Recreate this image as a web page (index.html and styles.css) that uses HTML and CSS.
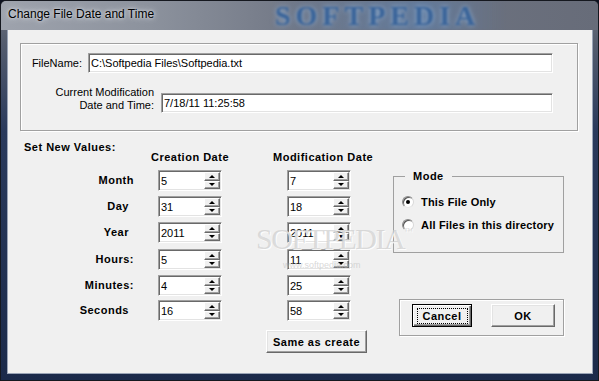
FILE: index.html
```html
<!DOCTYPE html>
<html lang="en">
  <head>
    <meta charset="UTF-8" />
    <meta name="viewport" content="width=device-width, initial-scale=1.0" />
    <title>Change File Date and Time</title>
    <link rel="stylesheet" href="styles.css">
  </head>
  <body>
    <div class="window">
      <div class="titlebar">
        <span class="title">Change File Date and Time</span>
        <span class="title-mark">SOFTPEDIA</span>
      </div>

      <div class="client">
        <div class="file-group etched">
          <div class="file-row">
            <label for="filename">FileName:</label>
            <input type="text" id="filename" class="field name-field" value="C:\Softpedia Files\Softpedia.txt" />
          </div>
          <div class="file-row two-line">
            <label for="curtime">Current Modification<br />Date and Time:</label>
            <input type="text" id="curtime" class="field time-field" value="7/18/11 11:25:58" />
          </div>
        </div>

        <div class="set-title">Set New Values:</div>
        <div class="cols heads">
          <div class="col-head create-head">Creation Date</div>
          <div class="col-head mod-head">Modification Date</div>
        </div>

        <div class="cols values">
          <fieldset class="mode">
            <legend>Mode</legend>
            <label class="radio"><input type="radio" name="mode" checked /> This File Only</label>
            <label class="radio"><input type="radio" name="mode" /> All Files in this directory</label>
          </fieldset>

          <div class="actions etched">
            <button class="btn focus cancel">Cancel</button>
            <button class="btn ok">OK</button>
          </div>

          <button class="btn same">Same as create</button>

          <div class="row-label">Month</div>
          <div class="spin create"><input type="text" value="5" /><span class="spin-btns"><span class="up"></span><span class="down"></span></span></div>
          <div class="spin mod"><input type="text" value="7" /><span class="spin-btns"><span class="up"></span><span class="down"></span></span></div>

          <div class="row-label short">Day</div>
          <div class="spin create"><input type="text" value="31" /><span class="spin-btns"><span class="up"></span><span class="down"></span></span></div>
          <div class="spin mod"><input type="text" value="18" /><span class="spin-btns"><span class="up"></span><span class="down"></span></span></div>

          <div class="row-label short">Year</div>
          <div class="spin create"><input type="text" value="2011" /><span class="spin-btns"><span class="up"></span><span class="down"></span></span></div>
          <div class="spin mod"><input type="text" value="2011" /><span class="spin-btns"><span class="up"></span><span class="down"></span></span></div>

          <div class="row-label">Hours:</div>
          <div class="spin create"><input type="text" value="5" /><span class="spin-btns"><span class="up"></span><span class="down"></span></span></div>
          <div class="spin mod"><input type="text" value="11" /><span class="spin-btns"><span class="up"></span><span class="down"></span></span></div>

          <div class="row-label">Minutes:</div>
          <div class="spin create"><input type="text" value="4" /><span class="spin-btns"><span class="up"></span><span class="down"></span></span></div>
          <div class="spin mod"><input type="text" value="25" /><span class="spin-btns"><span class="up"></span><span class="down"></span></span></div>

          <div class="row-label short">Seconds</div>
          <div class="spin create"><input type="text" value="16" /><span class="spin-btns"><span class="up"></span><span class="down"></span></span></div>
          <div class="spin mod"><input type="text" value="58" /><span class="spin-btns"><span class="up"></span><span class="down"></span></span></div>
        </div>
      </div>

      <div class="watermark">SOFTPEDIA<sup>™</sup></div>
      <div class="watermark-url">www.softpedia.com</div>
    </div>
  </body>
</html>
```

FILE: styles.css
```css
body {
  margin: 0;
  background-color: #0d1220;
  font-family: "Liberation Sans", Arial, sans-serif;
}
.window {
  position: relative;
  width: 599px;
  height: 381px;
  box-sizing: border-box;
  border: 1px solid #15181f;
  border-radius: 6px 6px 0 0;
  background: linear-gradient(to bottom, #6d7380 0, #555d6e 40px, #2a3a5c 130px, #1b2a4a 100%);
  display: flex;
  flex-direction: column;
  overflow: hidden;
}
.titlebar {
  position: relative;
  height: 29px;
  flex: none;
  background: linear-gradient(to right, #9ea3ad 0, #8c929d 25%, #717785 50%, #676c79 100%);
  overflow: hidden;
}
.title {
  position: relative;
  z-index: 1;
  display: block;
  padding-left: 7px;
  font-size: 12px;
  line-height: 26px;
  color: #000;
  text-shadow: 0 0 6px #e4e7ec, 0 0 3px #d8dce3;
}
.title-mark {
  position: absolute;
  left: 268px;
  top: 0;
  padding: 0 26px 0 6px;
  font-family: "Liberation Serif", serif;
  font-weight: bold;
  font-size: 28px;
  line-height: 29px;
  letter-spacing: 5px;
  color: #3b659a;
  text-shadow: 0 0 5px #8fb1d8;
  background: linear-gradient(to right, rgba(90, 130, 180, 0) 0, rgba(90, 130, 180, 0.5) 65%, rgba(90, 130, 180, 0) 100%);
  filter: blur(1.3px);
}
.client {
  flex: 1;
  margin: 0 6px 7px 7px;
  padding: 13px 13px 0 12px;
  background-color: #f0f0f0;
  box-shadow: 0 0 0 1px #9aa4b6;
  font-size: 11px;
  color: #000;
}

/* etched frames */
.etched {
  border: 1px solid #a0a0a0;
  box-shadow: inset 1px 1px #fff, 1px 1px #fff;
}
.file-group {
  width: 558px;
  box-sizing: border-box;
  padding: 9px 24px 17px 0;
}
.file-row {
  display: flex;
  justify-content: flex-end;
  align-items: center;
  gap: 6px;
}
.file-row label {
  line-height: 13px;
  text-align: right;
}
.file-row.two-line {
  margin-top: 13px;
  align-items: flex-end;
  gap: 7px;
}
.file-row.two-line label {
  padding-bottom: 1px;
}
.field {
  height: 20px;
  box-sizing: border-box;
  border: 1px solid;
  border-color: #a0a0a0 #fff #fff #a0a0a0;
  box-shadow: inset 1px 1px #696969, inset -1px -1px #e3e3e3;
  padding: 0 0 0 2px;
  font-family: "Liberation Sans", Arial, sans-serif;
  font-size: 11px;
  background-color: #fff;
  outline: none;
}
.name-field {
  width: 465px;
}
.time-field {
  width: 392px;
}

/* bold labels */
.set-title,
.col-head,
.row-label,
legend,
.radio,
.btn {
  font-weight: bold;
  font-size: 11px;
  letter-spacing: 0.5px;
}
.set-title {
  margin-top: 10px;
  padding-left: 4px;
  line-height: 13px;
}
.cols {
  display: grid;
  grid-template-columns: 122px 96px 155px 171px;
}
.heads {
  margin-top: -3px;
  height: 19px;
  line-height: 13px;
}
.create-head {
  grid-column: 2;
  justify-self: center;
}
.mod-head {
  grid-column: 3;
  margin-left: 35px;
}
.values {
  grid-template-rows: 26px 26px 27px 26px 25px 30px 23px;
}
.row-label {
  grid-column: 1;
  line-height: 21px;
  text-align: right;
  padding-right: 8px;
}
.row-label.short {
  padding-right: 13px;
}

/* spin boxes */
.spin {
  display: flex;
  align-self: start;
  width: 64px;
  height: 21px;
  box-sizing: border-box;
  border: 1px solid;
  border-color: #a0a0a0 #fff #fff #a0a0a0;
  padding: 1px;
  background-color: #fff;
  box-shadow: inset 1px 1px #696969, inset -1px -1px #e3e3e3;
}
.spin.create {
  grid-column: 2;
  margin-left: 16px;
}
.spin.mod {
  grid-column: 3;
  margin-left: 49px;
}
.spin input {
  flex: 1;
  min-width: 0;
  border: none;
  padding: 0 0 0 1px;
  font-family: "Liberation Sans", Arial, sans-serif;
  font-size: 11px;
  background: transparent;
  outline: none;
}
.spin-btns {
  display: flex;
  flex-direction: column;
  width: 16px;
}
.spin-btns span {
  flex: 1;
  display: flex;
  align-items: center;
  justify-content: center;
  background-color: #f0f0f0;
  border: 1px solid;
  border-color: #fff #696969 #696969 #fff;
  box-shadow: inset -1px -1px #a0a0a0;
}
.spin-btns span::before {
  content: "";
  width: 0;
  height: 0;
  border-left: 3px solid transparent;
  border-right: 3px solid transparent;
}
.spin-btns .up::before {
  border-bottom: 3px solid #000;
}
.spin-btns .down::before {
  border-top: 3px solid #000;
}

/* mode group */
.mode {
  grid-column: 4;
  grid-row: 1 / span 4;
  align-self: start;
  margin: 0;
  padding: 7px 0 16px 8px;
  min-width: 0;
  border: 1px solid #a0a0a0;
}
.mode legend {
  margin-left: 3px;
  padding: 0 8px;
  line-height: 13px;
}
.radio {
  display: flex;
  align-items: center;
  gap: 7px;
  height: 23px;
  letter-spacing: 0.2px;
}
.radio input {
  appearance: none;
  margin: 0;
  width: 12px;
  height: 12px;
  box-sizing: border-box;
  border-radius: 50%;
  border: 1px solid;
  border-color: #8a8a8a #d8d8d8 #e8e8e8 #8a8a8a;
  background-color: #fff;
  box-shadow: inset 1px 1px #555;
  display: flex;
  align-items: center;
  justify-content: center;
}
.radio input:checked::before {
  content: "";
  width: 4px;
  height: 4px;
  border-radius: 50%;
  background-color: #000;
}

/* buttons */
.btn {
  position: relative;
  height: 23px;
  padding: 0;
  font-family: "Liberation Sans", Arial, sans-serif;
  color: #000;
  background-color: #f0f0f0;
  border: 1px solid;
  border-color: #fff #696969 #696969 #fff;
  box-shadow: inset -1px -1px #a0a0a0, inset 1px 1px #e3e3e3;
}
.actions {
  grid-column: 4;
  grid-row: 6 / span 2;
  align-self: start;
  margin: -1px 0 0 6px;
  height: 37px;
  box-sizing: border-box;
  display: flex;
  align-items: flex-start;
  gap: 19px;
  padding: 4px 0 0 12px;
}
.cancel {
  width: 60px;
}
.ok {
  width: 64px;
}
.btn.focus {
  border-color: #000;
  box-shadow: inset 1px 1px #fff, inset -1px -1px #696969, inset -2px -2px #a0a0a0;
}
.btn.focus::after {
  content: "";
  position: absolute;
  inset: 3px 3px 2px 4px;
  border: 1px dotted #000;
}
.same {
  grid-column: 3;
  grid-row: 7;
  align-self: start;
  margin-left: 28px;
  width: 101px;
}

/* softpedia marks */
.watermark {
  position: absolute;
  left: 255px;
  top: 221px;
  font-family: "Liberation Serif", serif;
  font-size: 30px;
  letter-spacing: -1.5px;
  color: rgba(205, 205, 205, 0.7);
  text-shadow: 1px 1px rgba(255, 255, 255, 0.9);
  pointer-events: none;
}
.watermark sup {
  font-size: 9px;
  vertical-align: 15px;
}
.watermark-url {
  position: absolute;
  left: 282px;
  top: 259px;
  font-size: 9px;
  color: rgba(190, 190, 190, 0.6);
  pointer-events: none;
}
```
